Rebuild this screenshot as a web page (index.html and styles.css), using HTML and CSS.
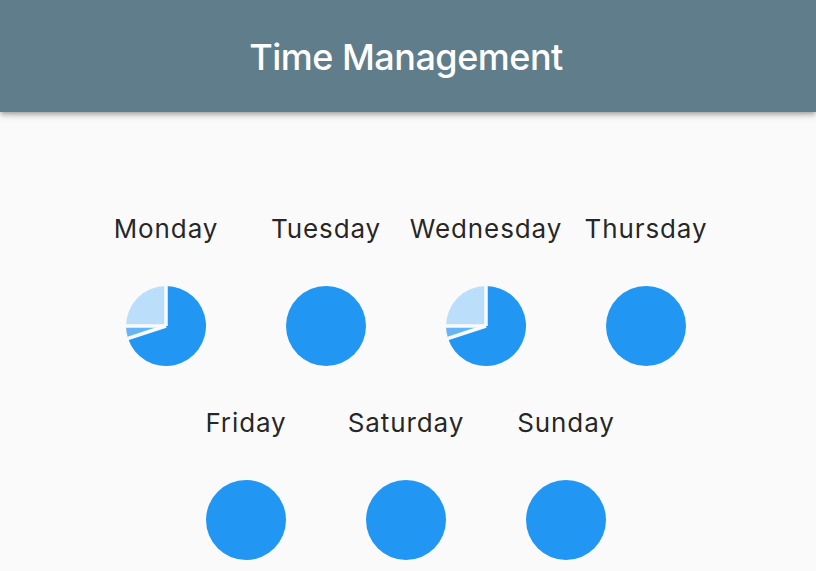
FILE: index.html
```html
<!DOCTYPE html>
<html>
<head>
<meta charset="utf-8">
<link rel="stylesheet" href="styles.css">
</head>
<body>
<header class="appbar"><h1 class="title">Time Management</h1></header>
<main class="content">
  <div class="days">
    <div class="day">
      <div class="label">Monday</div>
      <svg class="pie" viewBox="0 0 80 80" width="80" height="80">
        <path d="M40,40 L40,0 A40,40 0 1 1 1.955,52.36 Z" fill="#2196F3"/>
        <path d="M40,40 L1.955,52.36 A40,40 0 0 1 0,40 Z" fill="#64B5F6"/>
        <path d="M40,40 L0,40 A40,40 0 0 1 40,0 Z" fill="#BBDEFB"/>
        <g stroke="#FAFAFA" stroke-width="3.5">
          <line x1="40" y1="40" x2="40" y2="-2"/>
          <line x1="40" y1="40" x2="0.05" y2="52.98"/>
          <line x1="40" y1="40" x2="-2" y2="40"/>
        </g>
      </svg>
    </div>
    <div class="day">
      <div class="label">Tuesday</div>
      <svg class="pie" viewBox="0 0 80 80" width="80" height="80"><circle cx="40" cy="40" r="40" fill="#2196F3"/></svg>
    </div>
    <div class="day">
      <div class="label">Wednesday</div>
      <svg class="pie" viewBox="0 0 80 80" width="80" height="80">
        <path d="M40,40 L40,0 A40,40 0 1 1 1.955,52.36 Z" fill="#2196F3"/>
        <path d="M40,40 L1.955,52.36 A40,40 0 0 1 0,40 Z" fill="#64B5F6"/>
        <path d="M40,40 L0,40 A40,40 0 0 1 40,0 Z" fill="#BBDEFB"/>
        <g stroke="#FAFAFA" stroke-width="3.5">
          <line x1="40" y1="40" x2="40" y2="-2"/>
          <line x1="40" y1="40" x2="0.05" y2="52.98"/>
          <line x1="40" y1="40" x2="-2" y2="40"/>
        </g>
      </svg>
    </div>
    <div class="day">
      <div class="label">Thursday</div>
      <svg class="pie" viewBox="0 0 80 80" width="80" height="80"><circle cx="40" cy="40" r="40" fill="#2196F3"/></svg>
    </div>
    <div class="day">
      <div class="label">Friday</div>
      <svg class="pie" viewBox="0 0 80 80" width="80" height="80"><circle cx="40" cy="40" r="40" fill="#2196F3"/></svg>
    </div>
    <div class="day">
      <div class="label">Saturday</div>
      <svg class="pie" viewBox="0 0 80 80" width="80" height="80"><circle cx="40" cy="40" r="40" fill="#2196F3"/></svg>
    </div>
    <div class="day">
      <div class="label">Sunday</div>
      <svg class="pie" viewBox="0 0 80 80" width="80" height="80"><circle cx="40" cy="40" r="40" fill="#2196F3"/></svg>
    </div>
  </div>
</main>
</body>
</html>
```
FILE: styles.css
```css
html, body {
  margin: 0;
  padding: 0;
  background: #FAFAFA;
  height: 100%;
  overflow: hidden;
}
body {
  font-family: Inter, Roboto, "Liberation Sans", sans-serif;
}
.appbar {
  height: 112px;
  padding-right: 4px;
  background: #607D8B;
  display: flex;
  align-items: center;
  justify-content: center;
  box-shadow: 0 2px 4px -1px rgba(0,0,0,.2), 0 4px 5px 0 rgba(0,0,0,.14), 0 1px 10px 0 rgba(0,0,0,.12);
  position: relative;
  z-index: 1;
}
.title {
  margin: 0;
  color: #FFFFFF;
  font-family: Inter, Roboto, "Liberation Sans", sans-serif;
  font-weight: 500;
  font-size: 36px;
  letter-spacing: -0.5px;
  line-height: 44px;
  padding-top: 2px;
}
.content {
  padding: 101px 4px 0 0;
}
.days {
  display: flex;
  flex-wrap: wrap;
  justify-content: center;
  row-gap: 41px;
  max-width: 640px;
  margin: 0 auto;
}
.day {
  width: 160px;
  display: flex;
  flex-direction: column;
  align-items: center;
  gap: 41px;
}
.label {
  font-size: 26px;
  line-height: 32px;
  color: rgba(0,0,0,0.87);
  letter-spacing: 0.9px;
  white-space: nowrap;
}
.pie {
  display: block;
  overflow: hidden;
}
```
